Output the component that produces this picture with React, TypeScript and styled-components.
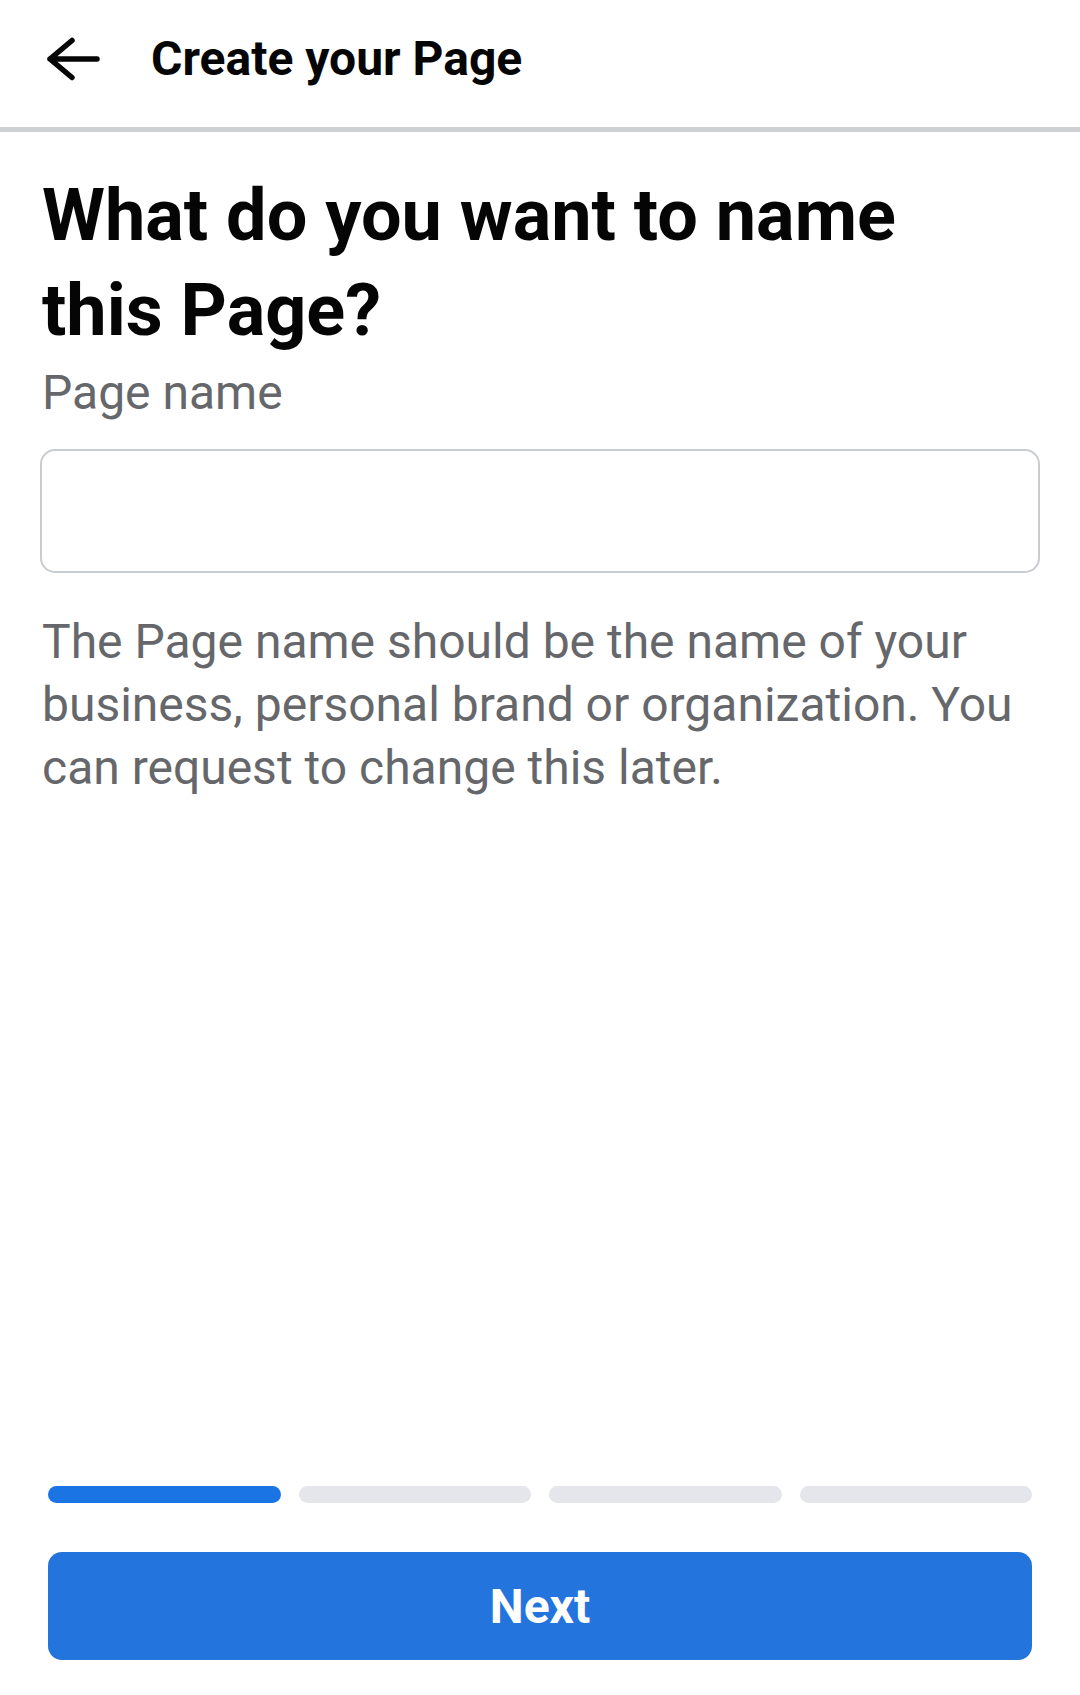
import React from "react";
import styled, { createGlobalStyle } from "styled-components";

const GlobalStyle = createGlobalStyle`
  html, body {
    margin: 0;
    padding: 0;
    background: #ffffff;
  }
  body {
    font-family: Roboto, "Liberation Sans", Arial, sans-serif;
    color: #050505;
  }
  * {
    box-sizing: border-box;
  }
`;

const STEPS = 4;
const CURRENT_STEP = 0;

export default function App() {
  return (
    <>
      <GlobalStyle />
      <Screen>
        <Header>
          <BackButton aria-label="Back">
            <svg width="56" height="46" viewBox="0 0 56 46" fill="none">
              <path
                d="M52 23H5M27 4.5L5 23l22 18.5"
                stroke="#050505"
                strokeWidth="5.5"
                strokeLinecap="round"
                strokeLinejoin="round"
              />
            </svg>
          </BackButton>
          <HeaderTitle>Create your Page</HeaderTitle>
        </Header>

        <Content>
          <Heading>What do you want to name this Page?</Heading>
          <FieldLabel htmlFor="page-name">Page name</FieldLabel>
          <NameInput id="page-name" type="text" />
          <HelpText>
            The Page name should be the name of your business, personal brand
            or organization. You can request to change this later.
          </HelpText>
        </Content>

        <Footer>
          <Progress>
            {Array.from({ length: STEPS }).map((_, i) => (
              <ProgressSegment key={i} $active={i === CURRENT_STEP} />
            ))}
          </Progress>
          <NextButton>Next</NextButton>
        </Footer>
      </Screen>
    </>
  );
}

const Screen = styled.div`
  display: flex;
  flex-direction: column;
  min-height: 1695px;
`;

const Header = styled.header`
  display: flex;
  align-items: center;
  height: 132px;
  padding: 0 0 9px 45px;
  border-bottom: 5px solid #ced0d4;
`;

const BackButton = styled.button`
  display: flex;
  align-items: center;
  justify-content: center;
  padding: 0;
  border: none;
  background: none;
  cursor: pointer;
  width: 56px;
  height: 46px;
  margin-right: 50px;
`;

const HeaderTitle = styled.h1`
  margin: 0;
  font-size: 48px;
  font-weight: 700;
  line-height: 56px;
  color: #050505;
`;

const Content = styled.main`
  flex: 1;
  display: flex;
  flex-direction: column;
  padding: 36px 40px 0 40px;
`;

const Heading = styled.h2`
  margin: 0;
  padding: 0 2px;
  font-size: 72px;
  font-weight: 700;
  line-height: 95px;
  color: #050505;
  max-width: 900px;
`;

const FieldLabel = styled.label`
  display: block;
  margin-top: 3px;
  padding: 0 2px;
  font-size: 48px;
  line-height: 63px;
  color: #65676b;
`;

const NameInput = styled.input`
  display: block;
  width: 100%;
  height: 124px;
  margin-top: 25px;
  padding: 0 24px;
  border: 2px solid #c9ccd1;
  border-radius: 15px;
  font-family: inherit;
  font-size: 48px;
  color: #050505;
  outline: none;
  background: #fff;
`;

const HelpText = styled.p`
  margin: 37px 0 0 0;
  padding: 0 2px;
  font-size: 48px;
  line-height: 63px;
  color: #65676b;
`;

const Footer = styled.footer`
  display: flex;
  flex-direction: column;
  padding: 0 48px 35px 48px;
`;

const Progress = styled.div`
  display: grid;
  grid-template-columns: repeat(4, 1fr);
  gap: 18px;
  margin-bottom: 49px;
`;

const ProgressSegment = styled.div<{ $active?: boolean }>`
  height: 17px;
  border-radius: 9px;
  background: ${(p) => (p.$active ? "#1b74e4" : "#e4e6eb")};
`;

const NextButton = styled.button`
  height: 108px;
  border: none;
  border-radius: 14px;
  background: #2374dd;
  color: #ffffff;
  font-family: inherit;
  font-size: 48px;
  font-weight: 700;
  cursor: pointer;
`;
